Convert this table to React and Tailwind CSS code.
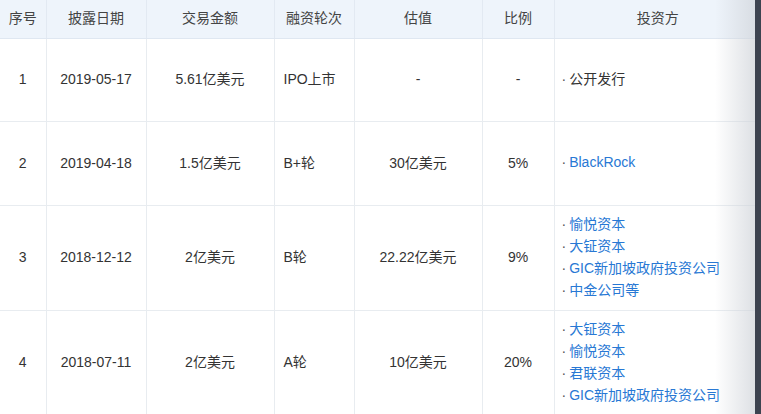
const rows = [
  { no: 1, date: '2019-05-17', amount: '5.61亿美元', round: 'IPO上市', value: '-', ratio: '-', investors: [{ name: '公开发行', link: false }], h: 'h-[83px]' },
  { no: 2, date: '2019-04-18', amount: '1.5亿美元', round: 'B+轮', value: '30亿美元', ratio: '5%', investors: [{ name: 'BlackRock', link: true }], h: 'h-[84px]' },
  {
    no: 3, date: '2018-12-12', amount: '2亿美元', round: 'B轮', value: '22.22亿美元', ratio: '9%',
    investors: [
      { name: '愉悦资本', link: true },
      { name: '大钲资本', link: true },
      { name: 'GIC新加坡政府投资公司', link: true },
      { name: '中金公司等', link: true },
    ],
    h: 'h-[105px]',
  },
  {
    no: 4, date: '2018-07-11', amount: '2亿美元', round: 'A轮', value: '10亿美元', ratio: '20%',
    investors: [
      { name: '大钲资本', link: true },
      { name: '愉悦资本', link: true },
      { name: '君联资本', link: true },
      { name: 'GIC新加坡政府投资公司', link: true },
    ],
    h: 'h-[103px]',
  },
];

const headers = ['序号', '披露日期', '交易金额', '融资轮次', '估值', '比例', '投资方'];

export default function App() {
  return (
    <div className="relative w-[761px] h-[414px] overflow-hidden bg-white font-['Liberation_Sans','Noto_Sans_CJK_SC',sans-serif] text-[14px] text-[#333]">
      <table className="w-full table-fixed border-collapse">
        <colgroup>
          <col className="w-[46px]" />
          <col className="w-[100px]" />
          <col className="w-[128px]" />
          <col className="w-[80px]" />
          <col className="w-[128px]" />
          <col className="w-[72px]" />
          <col />
        </colgroup>
        <thead>
          <tr className="h-[38px] bg-[#eef4fb]">
            {headers.map((h, i) => (
              <th
                key={h}
                className={`font-normal text-center text-[#444] border-b border-[#dfe7f1] ${i > 0 ? 'border-l border-l-[#e2e9f2]' : ''}`}
              >
                {h}
              </th>
            ))}
          </tr>
        </thead>
        <tbody>
          {rows.map((r) => (
            <tr key={r.no} className={`${r.h} border-b border-[#e8ecf0]`}>
              <td className="text-center">{r.no}</td>
              <td className="text-center border-l border-[#e8ecf0]">{r.date}</td>
              <td className="text-center border-l border-[#e8ecf0]">{r.amount}</td>
              <td className="pl-[9px] border-l border-[#e8ecf0]">{r.round}</td>
              <td className="text-center border-l border-[#e8ecf0]">{r.value}</td>
              <td className="text-center border-l border-[#e8ecf0]">{r.ratio}</td>
              <td className="pl-[7px] pt-[7px] pb-[9px] border-l border-[#e8ecf0]">
                {r.investors.map((inv) => (
                  <div key={inv.name} className="leading-[22px] whitespace-nowrap">
                    <span className="text-[#555] mr-[3px]">·</span>
                    <span className={inv.link ? 'text-[#2878d4]' : 'text-[#333]'}>{inv.name}</span>
                  </div>
                ))}
              </td>
            </tr>
          ))}
        </tbody>
      </table>

      {/* right edge shadow */}
      <div className="absolute top-0 right-[6px] h-full w-[40px] bg-gradient-to-r from-transparent to-[#cfd3d9]/70 pointer-events-none" />
      <div className="absolute top-0 right-0 h-full w-[6px] bg-[#3d4350]" />
    </div>
  );
}
